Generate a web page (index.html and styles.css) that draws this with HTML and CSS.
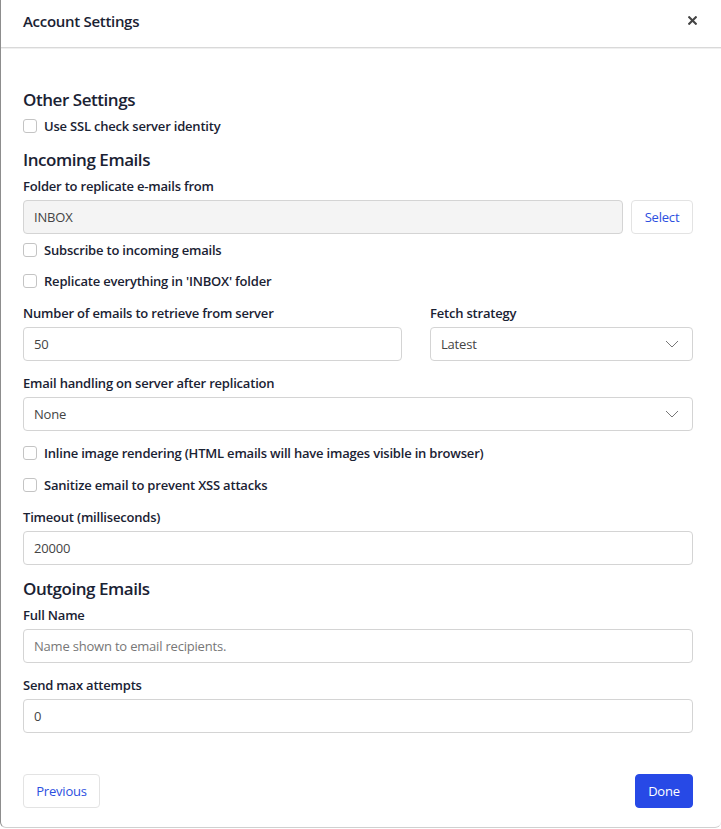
FILE: index.html
```html
<!DOCTYPE html>
<html>
<head>
<meta charset="utf-8">
<link rel="stylesheet" href="styles.css">
</head>
<body>
<div class="modal">
  <div class="modal-header">
    <div class="modal-title">Account Settings</div>
    <button class="close" aria-label="Close">
      <svg width="9" height="9" viewBox="0 0 9 9"><path d="M1.2 1.2 L7.8 7.8 M7.8 1.2 L1.2 7.8" stroke="#444" stroke-width="2.1" stroke-linecap="square"/></svg>
    </button>
  </div>
  <div class="modal-body">
    <h3 class="section-title">Other Settings</h3>
    <label class="check"><span class="box"></span>Use SSL check server identity</label>

    <h3 class="section-title">Incoming Emails</h3>
    <div class="field">
      <div class="label">Folder to replicate e-mails from</div>
      <div class="input-row">
        <div class="input disabled">INBOX</div>
        <button class="btn btn-outline btn-select">Select</button>
      </div>
    </div>
    <label class="check tight"><span class="box"></span>Subscribe to incoming emails</label>
    <label class="check"><span class="box"></span>Replicate everything in 'INBOX' folder</label>

    <div class="field two-col">
      <div class="col">
        <div class="label">Number of emails to retrieve from server</div>
        <div class="input">50</div>
      </div>
      <div class="col col-right">
        <div class="label">Fetch strategy</div>
        <div class="input select">Latest<svg class="chev" width="14" height="8" viewBox="0 0 14 8"><path d="M1 1 L7 7 L13 1" fill="none" stroke="#777" stroke-width="1"/></svg></div>
      </div>
    </div>

    <div class="field">
      <div class="label">Email handling on server after replication</div>
      <div class="input select">None<svg class="chev" width="14" height="8" viewBox="0 0 14 8"><path d="M1 1 L7 7 L13 1" fill="none" stroke="#777" stroke-width="1"/></svg></div>
    </div>
    <label class="check mid"><span class="box"></span>Inline image rendering (HTML emails will have images visible in browser)</label>
    <label class="check mid"><span class="box"></span>Sanitize email to prevent XSS attacks</label>

    <div class="field">
      <div class="label">Timeout (milliseconds)</div>
      <div class="input">20000</div>
    </div>

    <h3 class="section-title">Outgoing Emails</h3>
    <div class="field">
      <div class="label">Full Name</div>
      <div class="input placeholder">Name shown to email recipients.</div>
    </div>
    <div class="field">
      <div class="label">Send max attempts</div>
      <div class="input">0</div>
    </div>

    <div class="modal-footer">
      <button class="btn btn-outline">Previous</button>
      <button class="btn btn-primary">Done</button>
    </div>
  </div>
</div>
</body>
</html>
```
FILE: styles.css
```css
* { box-sizing: border-box; }
html, body { margin: 0; padding: 0; background: #fff; }
body {
  font-family: "Open Sans", "Noto Sans", sans-serif;
  color: #1a2233;
  letter-spacing: -0.2px;
}
.modal {
  width: 721px;
  height: 828px;
  border-left: 1px solid #8d8d8d;
  border-bottom: 1px solid #d0d0d0;
  border-radius: 0 0 6px 6px;
  background: #fff;
}
.modal-header {
  height: 48px;
  padding: 11px 0 0 22px;
  border-bottom: 1px solid #d9d9d9;
  display: flex;
  justify-content: space-between;
  align-items: flex-start;
  box-shadow: 0 1px 0 #f0f0f0;
}
.modal-title {
  font-size: 15px;
  font-weight: 600;
  line-height: 20px;
  letter-spacing: -0.3px;
}
.close {
  border: 0;
  background: none;
  padding: 0;
  margin: 5px 24px 0 0;
  width: 9px;
  height: 9px;
  display: flex;
}
.modal-body {
  padding: 40px 28px 0 22px;
}
.section-title {
  margin: 12px 0 0;
  font-size: 17px;
  line-height: 24px;
  font-weight: 600;
  letter-spacing: -0.45px;
}
.section-title:first-child { margin-top: 0; }
.check {
  display: flex;
  align-items: center;
  gap: 7px;
  height: 20px;
  margin-top: 11px;
  font-size: 13px;
  font-weight: 600;
}
.section-title + .check { margin-top: 4px; }
.check.tight { margin-top: 6px; }
.check.mid { margin-top: 12px; }
.box {
  width: 14px;
  height: 14px;
  border: 1px solid #c4c4c4;
  border-radius: 3px;
  background: #fff;
  flex: none;
}
.field { margin-top: 13px; }
.section-title + .field { margin-top: 5px; }
.label {
  font-size: 13px;
  font-weight: 600;
  line-height: 18px;
  margin-bottom: 5px;
}
.input {
  height: 34px;
  border: 1px solid #d4d4d4;
  border-radius: 4px;
  padding: 0 10px;
  display: flex;
  align-items: center;
  font-size: 13px;
  color: #444;
  background: #fff;
}
.input-row .input { flex: 1; }
.input.disabled { background: #f4f4f4; }
.input.placeholder { color: #777; }
.input.select { justify-content: space-between; padding-right: 13px; }
.chev { flex: none; }
.input-row { display: flex; gap: 8px; }
.two-col { display: flex; gap: 28px; }
.col { flex: 1 1 0; display: flex; flex-direction: column; }
.col-right { flex: 0 0 263px; }
.btn {
  font-family: "Open Sans", "Noto Sans", sans-serif;
  font-size: 13px;
  letter-spacing: -0.2px;
  height: 34px;
  border-radius: 4px;
  padding: 0 12px;
  cursor: pointer;
}
.btn-outline {
  background: #fff;
  border: 1px solid #e3e3e3;
  color: #2c4fe0;
}
.btn-select { width: 62px; flex: none; padding: 0; }
.btn-primary {
  background: #2749e6;
  border: 1px solid #2749e6;
  color: #fff;
  width: 58px;
  padding: 0;
}
.modal-footer {
  margin-top: 41px;
  display: flex;
  justify-content: space-between;
}
.modal-footer .btn-outline { width: 77px; padding: 0; }
```
